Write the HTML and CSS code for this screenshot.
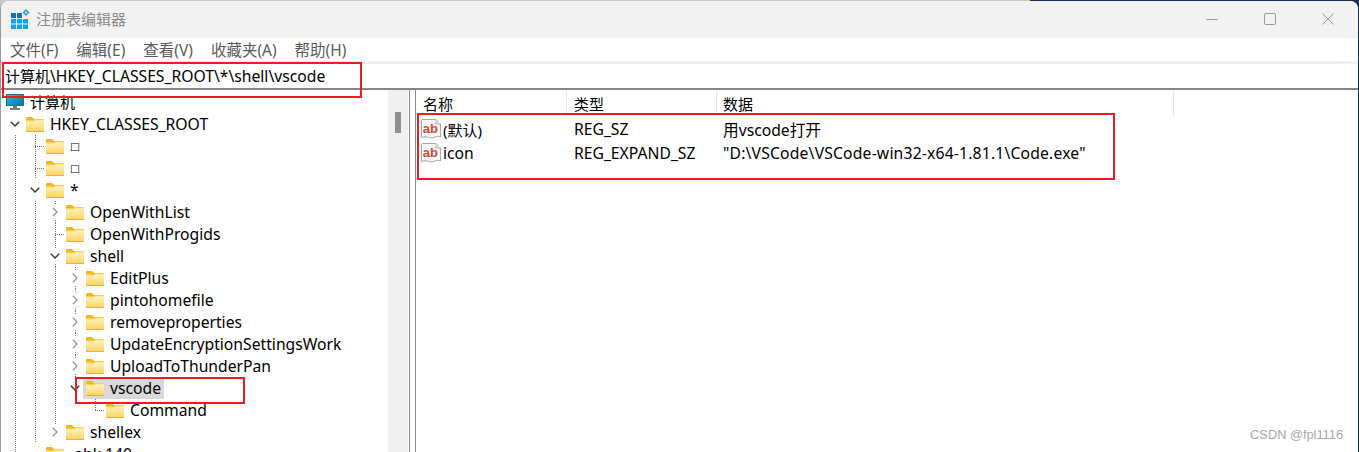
FILE: index.html
```html
<!DOCTYPE html>
<html lang="zh-CN">
<head>
  <meta charset="UTF-8">
  <title>注册表编辑器</title>
  <link rel="stylesheet" href="styles.css">
</head>
<body>
  <svg class="defs" aria-hidden="true">
    <defs>
      <linearGradient id="folder-fill" x1="0" y1="0" x2="0" y2="1">
        <stop offset="0" stop-color="#fff3c4"/>
        <stop offset="1" stop-color="#fcd25e"/>
      </linearGradient>
      <linearGradient id="screen-fill" x1="0" y1="0" x2="1" y2="1">
        <stop offset="0" stop-color="#2fc0ea"/>
        <stop offset="1" stop-color="#0a6f9e"/>
      </linearGradient>
      <symbol id="folder" viewBox="0 0 18 15">
        <path d="M0 1.2Q0 0 1.2 0H6L8 2H18V4H0Z" fill="#f7b51c"/>
        <path d="M0 3.5H8L9 2.5H18V15H0Z" fill="url(#folder-fill)"/>
        <path d="M0 14H18V15H0Z" fill="#e6b044"/>
        <path d="M0 3.5H8L9 2.5H18V3.2H9.3L8.3 4.2H0Z" fill="#fbc93a"/>
      </symbol>
      <symbol id="open" viewBox="0 0 10 6">
        <path d="M.8.8 5 5 9.2.8" fill="none" stroke="#333" stroke-width="1.4"/>
      </symbol>
      <symbol id="closed" viewBox="0 0 6 10">
        <path d="M.8.8 5 5 .8 9.2" fill="none" stroke="#9a9a9a" stroke-width="1.4"/>
      </symbol>
      <symbol id="ab" viewBox="0 0 20 20">
        <path d="M.5 1.5Q.5.5 1.5.5H15L19.500 5V18Q17 16.200 14 18T8 18.500Q4 16.500 .5 18.500Z" fill="#fbfbfb" stroke="#a9a9a9"/>
        <path d="M15 .5V5H19.500" fill="#e4e4e4" stroke="#b5b5b5"/>
        <text x="1.800" y="13.800" class="ab-text">ab</text>
      </symbol>
    </defs>
  </svg>

  <div class="window">
    <!-- title bar -->
    <div class="titlebar">
      <svg class="app-icon" viewBox="0 0 20 20" width="20" height="20">
        <path d="M1 4h5v5H1zM7 4h5v5H7z" fill="#0c72c4"/>
        <path d="M1 10h5v4.500H1zM7 10h5v4.500H7zM13 10h5v4.500h-5zM1 15.500h5V20H1zM7 15.500h5V20H7zM13 15.500h5V20h-5z" fill="#17a0f0"/>
        <path d="M16 0l3.500 3.500L16 7l-3.500-3.500z" fill="#2d9fd8"/>
        <path d="M16 2l1.500 1.500L16 5l-1.500-1.500z" fill="#bfe6f7"/>
      </svg>
      <span class="title-text">注册表编辑器</span>
      <div class="win-buttons">
        <svg class="win-btn" viewBox="0 0 12 12"><path d="M0 6.500h12"/></svg>
        <svg class="win-btn" viewBox="0 0 12 12"><rect x=".5" y=".5" width="11" height="11" rx="1.500"/></svg>
        <svg class="win-btn" viewBox="0 0 12 12"><path d="M.5.5l11 11M11.500.5l-11 11"/></svg>
      </div>
    </div>

    <!-- menu -->
    <div class="menubar">
      <span>文件(F)</span>
      <span>编辑(E)</span>
      <span>查看(V)</span>
      <span>收藏夹(A)</span>
      <span>帮助(H)</span>
    </div>

    <!-- address -->
    <div class="address"><span class="cjk">计算机</span>\HKEY_CLASSES_ROOT\*\shell\vscode</div>

    <div class="panes">
      <!-- key tree -->
      <div class="tree">
        <div class="tree-rows">
          <div class="row root">
            <svg class="pc-icon" viewBox="0 0 18 17" width="18" height="17">
              <rect x=".5" y=".5" width="17" height="11" fill="url(#screen-fill)" stroke="#2b6c86"/>
              <path d="M7 12h4v2H7zM4 14h10v2H4z" fill="#6f7f88"/>
            </svg>
            <span class="label cjk">计算机</span>
          </div>

          <div class="row">
            <span class="cell twist"><svg class="chev-open"><use href="#open"/></svg></span>
            <span class="node"><svg class="folder"><use href="#folder"/></svg><span class="label">HKEY_CLASSES_ROOT</span></span>
          </div>

          <div class="row">
            <span class="cell guide"></span>
            <span class="cell guide tee"></span>
            <span class="node"><svg class="folder"><use href="#folder"/></svg><span class="label tofu">□</span></span>
          </div>
          <div class="row">
            <span class="cell guide"></span>
            <span class="cell guide tee"></span>
            <span class="node"><svg class="folder"><use href="#folder"/></svg><span class="label tofu">□</span></span>
          </div>
          <div class="row">
            <span class="cell guide"></span>
            <span class="cell twist"><svg class="chev-open"><use href="#open"/></svg></span>
            <span class="node"><svg class="folder"><use href="#folder"/></svg><span class="label">*</span></span>
          </div>

          <div class="row">
            <span class="cell guide"></span>
            <span class="cell guide"></span>
            <span class="cell twist dots"><svg class="chev-closed"><use href="#closed"/></svg></span>
            <span class="node"><svg class="folder"><use href="#folder"/></svg><span class="label">OpenWithList</span></span>
          </div>
          <div class="row">
            <span class="cell guide"></span>
            <span class="cell guide"></span>
            <span class="cell guide tee"></span>
            <span class="node"><svg class="folder"><use href="#folder"/></svg><span class="label">OpenWithProgids</span></span>
          </div>
          <div class="row">
            <span class="cell guide"></span>
            <span class="cell guide"></span>
            <span class="cell twist dots"><svg class="chev-open"><use href="#open"/></svg></span>
            <span class="node"><svg class="folder"><use href="#folder"/></svg><span class="label">shell</span></span>
          </div>

          <div class="row">
            <span class="cell guide"></span>
            <span class="cell guide"></span>
            <span class="cell guide"></span>
            <span class="cell twist dots"><svg class="chev-closed"><use href="#closed"/></svg></span>
            <span class="node"><svg class="folder"><use href="#folder"/></svg><span class="label">EditPlus</span></span>
          </div>
          <div class="row">
            <span class="cell guide"></span>
            <span class="cell guide"></span>
            <span class="cell guide"></span>
            <span class="cell twist dots"><svg class="chev-closed"><use href="#closed"/></svg></span>
            <span class="node"><svg class="folder"><use href="#folder"/></svg><span class="label">pintohomefile</span></span>
          </div>
          <div class="row">
            <span class="cell guide"></span>
            <span class="cell guide"></span>
            <span class="cell guide"></span>
            <span class="cell twist dots"><svg class="chev-closed"><use href="#closed"/></svg></span>
            <span class="node"><svg class="folder"><use href="#folder"/></svg><span class="label">removeproperties</span></span>
          </div>
          <div class="row">
            <span class="cell guide"></span>
            <span class="cell guide"></span>
            <span class="cell guide"></span>
            <span class="cell twist dots"><svg class="chev-closed"><use href="#closed"/></svg></span>
            <span class="node"><svg class="folder"><use href="#folder"/></svg><span class="label">UpdateEncryptionSettingsWork</span></span>
          </div>
          <div class="row">
            <span class="cell guide"></span>
            <span class="cell guide"></span>
            <span class="cell guide"></span>
            <span class="cell twist dots"><svg class="chev-closed"><use href="#closed"/></svg></span>
            <span class="node"><svg class="folder"><use href="#folder"/></svg><span class="label">UploadToThunderPan</span></span>
          </div>
          <div class="row">
            <span class="cell guide"></span>
            <span class="cell guide"></span>
            <span class="cell guide"></span>
            <span class="cell twist dots"><svg class="chev-open"><use href="#open"/></svg></span>
            <span class="node selected"><svg class="folder"><use href="#folder"/></svg><span class="label">vscode</span></span>
          </div>
          <div class="row">
            <span class="cell guide"></span>
            <span class="cell guide"></span>
            <span class="cell guide"></span>
            <span class="cell empty"></span>
            <span class="cell guide tee-end"></span>
            <span class="node"><svg class="folder"><use href="#folder"/></svg><span class="label">Command</span></span>
          </div>

          <div class="row">
            <span class="cell guide"></span>
            <span class="cell guide"></span>
            <span class="cell twist dots-top"><svg class="chev-closed"><use href="#closed"/></svg></span>
            <span class="node"><svg class="folder"><use href="#folder"/></svg><span class="label">shellex</span></span>
          </div>

          <div class="row">
            <span class="cell guide"></span>
            <span class="cell twist"></span>
            <span class="node"><svg class="folder"><use href="#folder"/></svg><span class="label">.abk 140</span></span>
          </div>
        </div>
        <div class="scrollbar"><div class="thumb"></div></div>
      </div>

      <div class="splitter"></div>

      <!-- values -->
      <div class="values">
        <div class="val-head">
          <div class="col-name">名称</div>
          <div class="col-type">类型</div>
          <div class="col-data">数据</div>
        </div>
        <div class="val-row">
          <div class="col-name"><svg class="ab-icon"><use href="#ab"/></svg><span class="cjk">(默认)</span></div>
          <div class="col-type">REG_SZ</div>
          <div class="col-data">用vscode打开</div>
        </div>
        <div class="val-row">
          <div class="col-name"><svg class="ab-icon"><use href="#ab"/></svg><span>icon</span></div>
          <div class="col-type">REG_EXPAND_SZ</div>
          <div class="col-data path">"D:\VSCode\VSCode-win32-x64-1.81.1\Code.exe"</div>
        </div>
      </div>
    </div>
  </div>

  <!-- annotations on top of the screenshot -->
  <div class="mark mark-address"></div>
  <div class="mark mark-key"></div>
  <div class="mark mark-values"></div>
  <div class="watermark">CSDN @fpl1116</div>
</body>
</html>
```

FILE: styles.css
```css
html, body {
  margin: 0;
  height: 452px;
  overflow: hidden;
}
body {
  position: relative;
  background: linear-gradient(to right, #c9c9c9 1030px, #1d2c55 1030px);
  font-family: "Noto Sans", "Noto Sans CJK SC", sans-serif;
  font-size: 15.7px;
  color: #000;
}
.defs {
  position: absolute;
  width: 0;
  height: 0;
}
.cjk {
  font-size: 15px;
}
.ab-text {
  font-family: "Liberation Sans", sans-serif;
  font-weight: 700;
  font-size: 13px;
  fill: #d8472b;
}
.window {
  box-sizing: border-box;
  margin: 1px 1px 0 0;
  height: 451px;
  background: #fff;
  border-radius: 8px 8px 0 0;
  border-left: 1px solid #9a9a9a;
  overflow: hidden;
  display: flex;
  flex-direction: column;
}

/* Title bar */
.titlebar {
  box-sizing: border-box;
  height: 37px;
  flex-shrink: 0;
  background: #f2f2f2;
  display: flex;
  align-items: center;
  padding: 0 0 2px 9px;
}
.app-icon {
  margin-right: 6px;
  flex-shrink: 0;
}
.title-text {
  color: #8a8a8a;
  font-size: 15px;
}
.win-buttons {
  margin-left: auto;
  display: flex;
  gap: 46px;
  padding-right: 24px;
}
.win-btn {
  width: 12px;
  height: 12px;
  fill: none;
  stroke: #9b9b9b;
  stroke-width: 1;
}

/* Menu */
.menubar {
  height: 23px;
  flex-shrink: 0;
  display: flex;
  align-items: center;
  gap: 18px;
  padding-left: 9px;
  color: #5a5a5a;
  font-size: 15.5px;
}

/* Address */
.address {
  box-sizing: border-box;
  height: 27px;
  flex-shrink: 0;
  background: #fff;
  border-top: 3px solid #f0f0f0;
  padding-left: 4px;
  line-height: 24px;
  white-space: nowrap;
}

.panes {
  flex: 1;
  min-height: 0;
  display: flex;
  border-top: 2px solid #858585;
}

/* Tree */
.tree {
  width: 407px;
  flex-shrink: 0;
  display: flex;
  overflow: hidden;
}
.tree-rows {
  flex: 1;
  padding: 1px 0 0 4px;
}
.row {
  height: 22px;
  display: flex;
  align-items: stretch;
  white-space: nowrap;
}
.row.root {
  align-items: center;
  padding-left: 1px;
}
.pc-icon {
  margin-right: 6px;
  flex-shrink: 0;
}
.cell {
  width: 20px;
  flex-shrink: 0;
  display: flex;
  align-items: center;
  justify-content: center;
}
.guide {
  background: repeating-linear-gradient(to bottom, #777 0 1px, transparent 1px 2px) center top / 1px 100% no-repeat;
}
.guide.tee {
  background:
    repeating-linear-gradient(to bottom, #777 0 1px, transparent 1px 2px) center top / 1px 100% no-repeat,
    repeating-linear-gradient(to right, #777 0 1px, transparent 1px 2px) right center / 10px 1px no-repeat;
}
.guide.tee-end {
  background:
    repeating-linear-gradient(to bottom, #777 0 1px, transparent 1px 2px) center top / 1px 50% no-repeat,
    repeating-linear-gradient(to right, #777 0 1px, transparent 1px 2px) right center / 10px 1px no-repeat;
}
.twist.dots {
  background:
    repeating-linear-gradient(to bottom, #777 0 1px, transparent 1px 2px) center top / 1px 3px no-repeat,
    repeating-linear-gradient(to bottom, #777 0 1px, transparent 1px 2px) center bottom / 1px 3px no-repeat;
}
.twist.dots-top {
  background: repeating-linear-gradient(to bottom, #777 0 1px, transparent 1px 2px) center top / 1px 3px no-repeat;
}
.chev-open {
  width: 10px;
  height: 6px;
}
.chev-closed {
  width: 6px;
  height: 10px;
}
.node {
  display: flex;
  align-items: center;
  margin-left: -2px;
  padding: 0 3px;
}
.node.selected {
  background: #d9d9d9;
}
.folder {
  width: 18px;
  height: 15px;
  flex-shrink: 0;
  margin-right: 6px;
}
.label {
  line-height: 22px;
}
.tofu {
  font-family: "DejaVu Sans", sans-serif;
  font-size: 10.5px;
}
.scrollbar {
  width: 20px;
  flex-shrink: 0;
  background: #f0f0f0;
}
.thumb {
  width: 6px;
  height: 21px;
  margin: 22px 0 0 7px;
  background: #8f8f8f;
}
.splitter {
  box-sizing: border-box;
  width: 7px;
  flex-shrink: 0;
  border-left: 1px solid #8a8a8a;
  border-right: 1px solid #8a8a8a;
  margin-left: 1px;
}

/* Values */
.values {
  flex: 1;
  min-width: 0;
}
.val-head {
  height: 26px;
  margin-top: 1px;
  display: flex;
  align-items: center;
  font-size: 15px;
}
.val-head .col-name,
.val-head .col-type {
  border-right: 1px solid #e5e5e5;
}
.val-head > div {
  box-sizing: border-box;
  height: 26px;
  line-height: 26px;
}
.val-head .col-data {
  width: 457px;
  flex: none;
  border-right: 1px solid #e5e5e5;
}
.val-row {
  height: 24px;
  display: flex;
  align-items: center;
}
.col-name {
  box-sizing: border-box;
  width: 151px;
  padding-left: 7px;
  display: flex;
  align-items: center;
  white-space: nowrap;
}
.val-row .col-name {
  padding-left: 5px;
}
.col-type {
  box-sizing: border-box;
  width: 150px;
  padding-left: 7px;
  white-space: nowrap;
}
.col-data {
  padding-left: 6px;
  white-space: nowrap;
}
.path {
  letter-spacing: 0.18px;
}
.ab-icon {
  width: 20px;
  height: 20px;
  flex-shrink: 0;
  margin-right: 2px;
}

/* Red annotation boxes */
.mark {
  position: absolute;
  box-sizing: border-box;
  border: 2px solid #ed1c24;
}
.mark-address {
  left: 2px;
  top: 62px;
  width: 360px;
  height: 36px;
}
.mark-key {
  left: 75px;
  top: 377px;
  width: 170px;
  height: 27px;
}
.mark-values {
  left: 417px;
  top: 113px;
  width: 698px;
  height: 67px;
}
.watermark {
  position: absolute;
  right: 16px;
  bottom: 10px;
  font-family: "Liberation Sans", sans-serif;
  font-size: 12.8px;
  color: #a8a8a8;
}
```
